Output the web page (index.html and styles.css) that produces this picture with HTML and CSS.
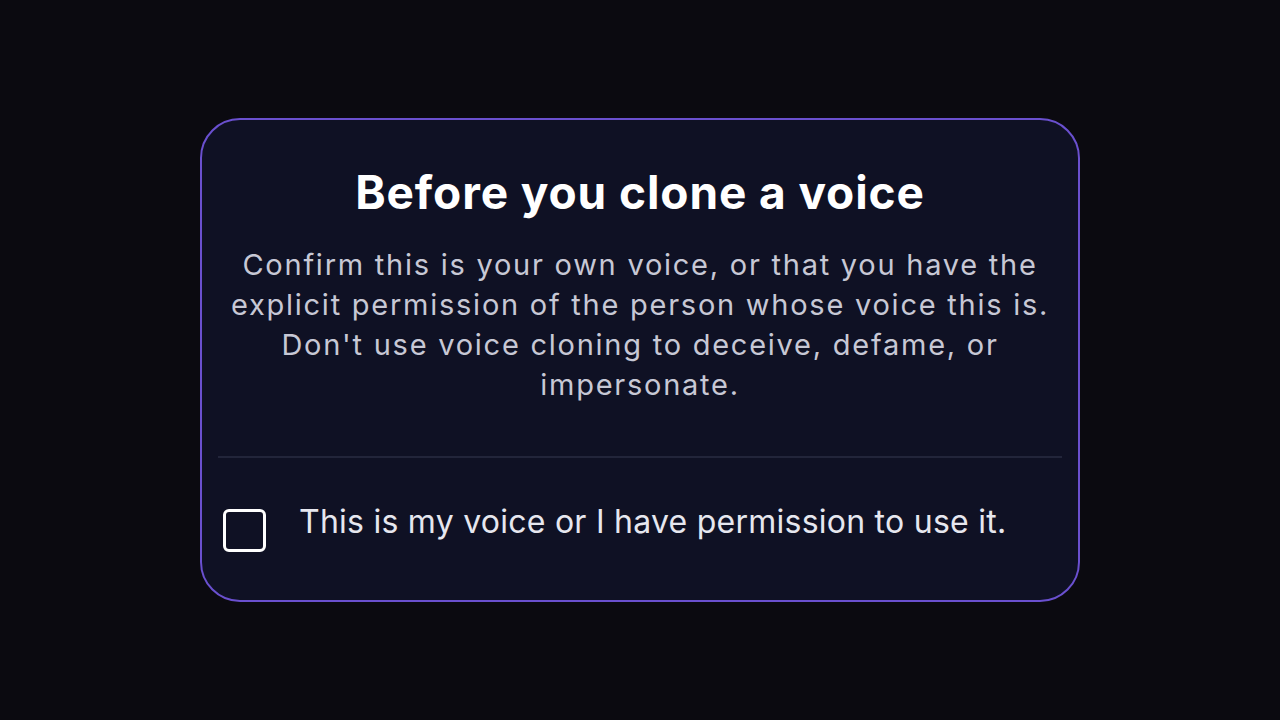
FILE: index.html
```html
<!DOCTYPE html>
<html lang="en">
<head>
<meta charset="utf-8">
<title>Before you clone a voice</title>
<link rel="stylesheet" href="styles.css">
</head>
<body>
<main class="stage">
  <section class="card">
    <h1 class="title">Before you clone a voice</h1>
    <p class="desc">Confirm this is your own voice, or that you have the explicit permission of the person whose voice this is. Don't use voice cloning to deceive, defame, or impersonate.</p>
    <hr class="divider">
    <label class="consent">
      <span class="box"></span>
      <span class="consent-text">This is my voice or I have permission to use it.</span>
    </label>
  </section>
</main>
</body>
</html>
```
FILE: styles.css
```css
html, body {
  margin: 0;
  padding: 0;
  background: #0b0a10;
  height: 100%;
}
body {
  font-family: Inter, "Noto Sans", sans-serif;
}
.stage {
  width: 1280px;
  height: 720px;
  display: flex;
  align-items: center;
  justify-content: center;
}
.card {
  box-sizing: border-box;
  width: 880px;
  height: 484px;
  margin-top: -1px;
  background: #0f1124;
  border: 2px solid #6a50cf;
  border-radius: 40px;
  padding: 44px 16px 0;
  display: flex;
  flex-direction: column;
  align-items: stretch;
}
.title {
  margin: 0;
  text-align: center;
  color: #ffffff;
  font-size: 46px;
  font-weight: 700;
  line-height: 56px;
  letter-spacing: 0.9px;
}
.desc {
  margin: 25px 0 0;
  text-align: center;
  color: #c7c8d5;
  font-size: 29px;
  line-height: 40px;
  letter-spacing: 1.75px;
}
.divider {
  margin: 51px 0 0;
  border: 0;
  height: 2px;
  background: #22253a;
}
.consent {
  display: flex;
  align-items: flex-start;
  gap: 33px;
  margin: 44px 0 0 5px;
}
.box {
  box-sizing: border-box;
  width: 43px;
  height: 43px;
  margin-top: 7px;
  border: 3px solid #ffffff;
  border-radius: 6px;
  flex: none;
}
.consent-text {
  color: #e6e7ef;
  font-size: 32px;
  line-height: 40px;
  letter-spacing: 0.25px;
}
```
